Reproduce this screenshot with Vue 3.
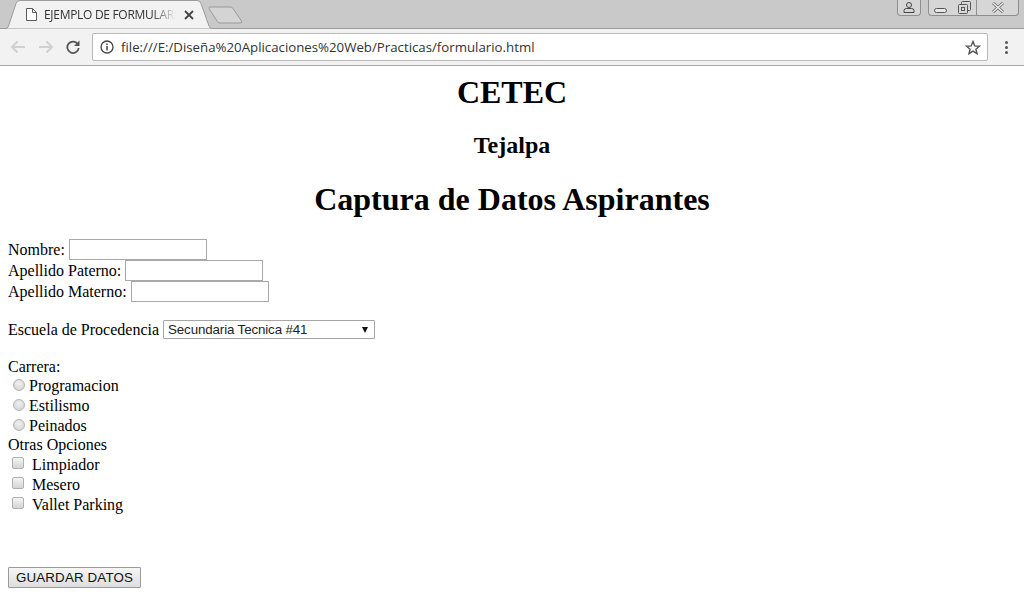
<template>
  <div class="window">
    <!-- Tab strip -->
    <div class="tabstrip">
      <div class="tab">
        <svg class="tab-shape" width="208" height="29" viewBox="0 0 208 29">
          <path d="M0 28.500 L1 28.500 Q2.500 28.500 3.500 26 L11 3.500 Q12 0.500 15 0.500 L192 0.500 Q195 0.500 196 3.500 L204 26 Q205 28.500 207 28.500 L208 28.500" fill="#f2f2f2" stroke="#9c9c9c" />
        </svg>
        <svg class="tab-favicon" width="11" height="13" viewBox="0 0 11 13">
          <path d="M0.500 0.500 H6.500 L10.500 4.500 V12.500 H0.500 Z M6.500 0.500 V4.500 H10.500" fill="#fff" stroke="#5a5a5a" />
        </svg>
        <span class="tab-title">EJEMPLO DE FORMULARIO</span>
        <svg class="tab-close" width="10" height="10" viewBox="0 0 10 10">
          <path d="M1 1 L9 9 M9 1 L1 9" stroke="#444" stroke-width="1.800" />
        </svg>
      </div>
      <svg class="newtab" width="35" height="18" viewBox="0 0 35 18">
        <path d="M2 1 H22 Q24 1 25 2.500 L33.500 15 Q34.500 17 32 17 H12 Q10 17 9 15 L1 2.500 Q0.500 1 2 1 Z" fill="#d4d4d4" stroke="#9a9a9a" />
      </svg>
      <div class="spacer"></div>
      <div class="winbtn user">
        <svg width="12" height="11" viewBox="0 0 12 11">
          <circle cx="6" cy="3" r="2.500" fill="none" stroke="#444" />
          <path d="M1 10.500 V8.500 Q1 6.500 3.500 6.500 H8.500 Q11 6.500 11 8.500 V10.500 Z" fill="none" stroke="#444" />
        </svg>
      </div>
      <div class="winbtns">
        <div class="winbtn-item w-min">
          <svg width="13" height="5" viewBox="0 0 13 5"><rect x="0.500" y="0.500" width="12" height="4" rx="2" fill="#e8e8e8" stroke="#555" /></svg>
        </div>
        <div class="winbtn-item w-max">
          <svg width="13" height="13" viewBox="0 0 13 13">
            <rect x="3.500" y="0.500" width="9" height="9" rx="1" fill="none" stroke="#555" />
            <rect x="0.500" y="3.500" width="9" height="9" rx="1" fill="#d8d8d8" stroke="#555" />
            <rect x="3.500" y="6.500" width="3" height="3" fill="none" stroke="#555" />
          </svg>
        </div>
        <div class="winbtn-item w-close">
          <svg width="14" height="11" viewBox="0 0 14 11">
            <path d="M2 1 L12 10 M12 1 L2 10" stroke="#666" stroke-width="3" />
            <path d="M2 1 L12 10 M12 1 L2 10" stroke="#ececec" stroke-width="1.500" />
          </svg>
        </div>
      </div>
    </div>

    <!-- Toolbar -->
    <div class="toolbar">
      <svg class="nav" width="16" height="14" viewBox="0 0 16 14">
        <path d="M15 7 H2 M7.500 1.500 L2 7 L7.500 12.500" fill="none" stroke="#d0d0d0" stroke-width="2" />
      </svg>
      <svg class="nav" width="16" height="14" viewBox="0 0 16 14">
        <path d="M1 7 H14 M8.500 1.500 L14 7 L8.500 12.500" fill="none" stroke="#d0d0d0" stroke-width="2" />
      </svg>
      <svg class="nav" width="14" height="14" viewBox="0 0 14 14">
        <path d="M12 4.500 A5.700 5.700 0 1 0 12.700 8" fill="none" stroke="#555" stroke-width="1.800" />
        <path d="M13.500 0.500 V6 H8 Z" fill="#555" />
      </svg>
      <div class="omnibox">
        <svg class="info" width="14" height="14" viewBox="0 0 14 14">
          <circle cx="7" cy="7" r="6" fill="none" stroke="#444" stroke-width="1.300" />
          <path d="M7 6 V10.500 M7 3.500 V5" stroke="#444" stroke-width="1.500" />
        </svg>
        <span class="url">file:///E:/Diseña%20Aplicaciones%20Web/Practicas/formulario.html</span>
        <svg class="star" width="16" height="15" viewBox="0 0 16 15">
          <path d="M8 1.500 L9.800 5.900 L14.500 6.200 L10.900 9.200 L12 13.700 L8 11.200 L4 13.700 L5.100 9.200 L1.500 6.200 L6.200 5.900 Z" fill="none" stroke="#555" stroke-width="1.400" />
        </svg>
      </div>
      <div class="menu-dots"><i></i><i></i><i></i></div>
    </div>

    <!-- Page -->
    <form class="page" @submit.prevent>
      <h1 class="first">CETEC</h1>
      <h2>Tejalpa</h2>
      <h1>Captura de Datos Aspirantes</h1>

      <div v-for="campo in campos" :key="campo" class="field">
        <label>{{ campo }}:</label>
        <input type="text" class="text-input" />
      </div>

      <div class="field escuela">
        <label>Escuela de Procedencia</label>
        <div class="select-wrap">
          <select class="select">
            <option>Secundaria Tecnica #41</option>
            <option>Secundaria Tecnica #12</option>
          </select>
          <span class="select-arrow"></span>
        </div>
      </div>

      <div class="line carrera">Carrera:</div>
      <label v-for="op in carreras" :key="op" class="radio-row">
        <input type="radio" name="carrera" class="radio" />
        <span>{{ op }}</span>
      </label>

      <div class="line otras">Otras Opciones</div>
      <label v-for="op in otras" :key="op" class="check-row">
        <input type="checkbox" class="check" />
        <span>{{ op }}</span>
      </label>

      <button type="submit" class="guardar">GUARDAR DATOS</button>
    </form>
  </div>
</template>

<script setup>
const campos = ['Nombre', 'Apellido Paterno', 'Apellido Materno']
const carreras = ['Programacion', 'Estilismo', 'Peinados']
const otras = ['Limpiador', 'Mesero', 'Vallet Parking']
</script>

<style scoped>
.window {
  width: 1024px;
  height: 610px;
  overflow: hidden;
  background: #fff;
}

/* Tab strip */
.tabstrip {
  height: 29px;
  background: #c9c9c9;
  box-shadow: inset 0 -1px 0 #9c9c9c;
  display: flex;
  align-items: flex-start;
  padding-left: 5px;
  box-sizing: border-box;
}

.tab {
  position: relative;
  width: 208px;
  height: 29px;
  display: flex;
  align-items: center;
  padding-left: 21px;
  box-sizing: border-box;
}

.tab-shape {
  position: absolute;
  left: 0;
  top: 0;
}

.tab-favicon {
  position: relative;
  margin-right: 7px;
}

.tab-title {
  position: relative;
  width: 132px;
  overflow: hidden;
  white-space: nowrap;
  font-family: "Open Sans", sans-serif;
  font-size: 12px;
  letter-spacing: -0.3px;
  color: #333;
  -webkit-mask-image: linear-gradient(to right, #000 82%, transparent 100%);
  mask-image: linear-gradient(to right, #000 82%, transparent 100%);
}

.tab-close {
  position: relative;
  margin-left: 8px;
}

.newtab {
  margin-left: -5px;
  margin-top: 6px;
}

.spacer {
  flex: 1;
}

.winbtn {
  width: 24px;
  height: 16px;
  box-sizing: border-box;
  border: 1px solid #8e8e8e;
  border-top: 0;
  border-radius: 0 0 4px 4px;
  background: #d6d6d6;
  display: flex;
  align-items: center;
  justify-content: center;
  margin-right: 7px;
}

.winbtns {
  display: flex;
  height: 16px;
  box-sizing: border-box;
  border: 1px solid #8e8e8e;
  border-top: 0;
  border-radius: 0 0 4px 4px;
  background: #d6d6d6;
  margin-right: 5px;
}

.winbtn-item {
  display: flex;
  align-items: center;
  justify-content: center;
  box-sizing: border-box;
}

.w-min {
  width: 23px;
  padding-top: 5px;
}

.w-max {
  width: 25px;
  border-right: 1px solid #8e8e8e;
}

.w-close {
  width: 41px;
}

/* Toolbar */
.toolbar {
  height: 37px;
  background: #f2f2f2;
  border-bottom: 1px solid #a8a8a8;
  box-sizing: border-box;
  display: flex;
  align-items: center;
  padding-left: 10px;
}

.nav {
  margin-right: 12px;
}

.omnibox {
  width: 896px;
  height: 28px;
  box-sizing: border-box;
  background: #fff;
  border: 1px solid #b9b9b9;
  border-radius: 2px;
  display: flex;
  align-items: center;
  padding-left: 7px;
  padding-right: 6px;
}

.info {
  margin-right: 7px;
}

.url {
  flex: 1;
  font-family: "Open Sans", sans-serif;
  font-size: 13.26px;
  color: #333;
  white-space: nowrap;
}

.menu-dots {
  display: flex;
  flex-direction: column;
  gap: 2px;
  margin-left: 17px;
}

.menu-dots i {
  display: block;
  width: 3px;
  height: 3px;
  background: #555;
  border-radius: 50%;
}

/* Page */
.page {
  padding: 8px 8px 0;
  font-family: "Liberation Serif", serif;
  font-size: 16px;
  color: #000;
  display: flex;
  flex-direction: column;
  align-items: flex-start;
}

h1,
h2 {
  align-self: stretch;
  text-align: center;
  font-weight: bold;
  margin: 0;
}

h1 {
  font-size: 32px;
  margin-bottom: 21px;
}

h2 {
  font-size: 24px;
  margin-bottom: 22px;
}

.field {
  display: flex;
  align-items: center;
  gap: 4px;
  height: 21px;
}

.text-input {
  width: 138px;
  height: 21px;
  box-sizing: border-box;
  border: 1px solid #a9a9a9;
  padding: 1px 2px;
  margin: 0;
  background: #fff;
}

.escuela {
  margin-top: 17px;
}

.select-wrap {
  position: relative;
  display: flex;
}

.select {
  appearance: none;
  width: 212px;
  height: 19px;
  box-sizing: border-box;
  border: 1px solid #a6a6a6;
  border-radius: 1px;
  background: #fff;
  font-family: "Liberation Sans", sans-serif;
  font-size: 13.333px;
  letter-spacing: -0.12px;
  margin: 0;
  padding: 0 4px;
  color: #222;
}

.select-arrow {
  position: absolute;
  right: 7px;
  top: 7px;
  width: 0;
  height: 0;
  border-left: 3px solid transparent;
  border-right: 3px solid transparent;
  border-top: 6px solid #111;
  pointer-events: none;
}

.line {
  height: 18px;
  line-height: 18px;
}

.carrera {
  margin-top: 18px;
}

.otras {
  height: 19px;
  line-height: 17px;
}

.radio-row,
.check-row {
  display: flex;
  align-items: center;
  height: 20px;
}

.radio {
  appearance: none;
  width: 12px;
  height: 12px;
  margin: -3px 4px 0 5px;
  border-radius: 50%;
  border: 1px solid #b4b4b4;
  background: radial-gradient(circle at 50% 35%, #f0f0f0, #cfcfcf);
  box-sizing: border-box;
}

.check {
  appearance: none;
  width: 12px;
  height: 12px;
  margin: -5px 8px 0 4px;
  border-radius: 2px;
  border: 1px solid #b0b0b0;
  background: linear-gradient(#f4f4f4, #d4d4d4);
  box-sizing: border-box;
}

.guardar {
  margin-top: 52px;
  width: 133px;
  height: 21px;
  box-sizing: border-box;
  border: 1px solid #9a9a9a;
  border-radius: 1px;
  background: linear-gradient(#f6f6f6, #dedede);
  font-family: "Liberation Sans", sans-serif;
  font-size: 13.333px;
  letter-spacing: 0.15px;
  color: #111;
  padding: 0;
}
</style>
